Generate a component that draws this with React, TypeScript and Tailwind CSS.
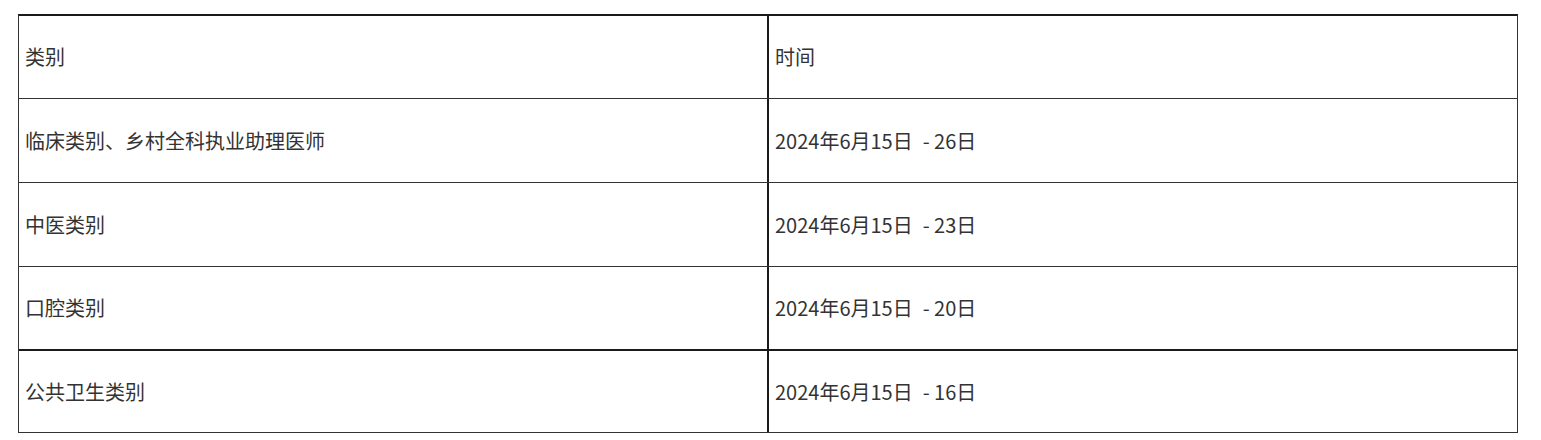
const rows = [
    { category: '临床类别、乡村全科执业助理医师', time: '2024年6月15日\u2002-\u00a026日', h: 'h-[84px] border-b border-[#333]' },
    { category: '中医类别', time: '2024年6月15日\u2002-\u00a023日', h: 'h-[84px] border-b border-[#333]' },
    { category: '口腔类别', time: '2024年6月15日\u2002-\u00a020日', h: 'h-[84px] border-b-2 border-[#1a1a1a]' },
    { category: '公共卫生类别', time: '2024年6月15日\u2002-\u00a016日', h: 'h-[81px]' },
];

export default function App() {
    return (
        <div className="pt-[14px] pl-[18px] bg-white min-h-screen text-[#333] text-[20px] font-['Noto_Sans_CJK_SC','Noto_Sans',sans-serif]">
            <div className="w-[1500px] border-t-2 border-t-[#1a1a1a] border-x border-b border-[#333]">
                <div className="flex h-[83px] border-b border-[#333]">
                    <div className="w-[750px] border-r-2 border-[#1a1a1a] flex items-center pl-[6px]">类别</div>
                    <div className="flex-1 flex items-center pl-[6px]">时间</div>
                </div>
                {rows.map((row) => (
                    <div key={row.category} className={`flex ${row.h}`}>
                        <div className="w-[750px] border-r-2 border-[#1a1a1a] flex items-center pl-[6px]">{row.category}</div>
                        <div className="flex-1 flex items-center pl-[6px]">{row.time}</div>
                    </div>
                ))}
            </div>
        </div>
    );
}
